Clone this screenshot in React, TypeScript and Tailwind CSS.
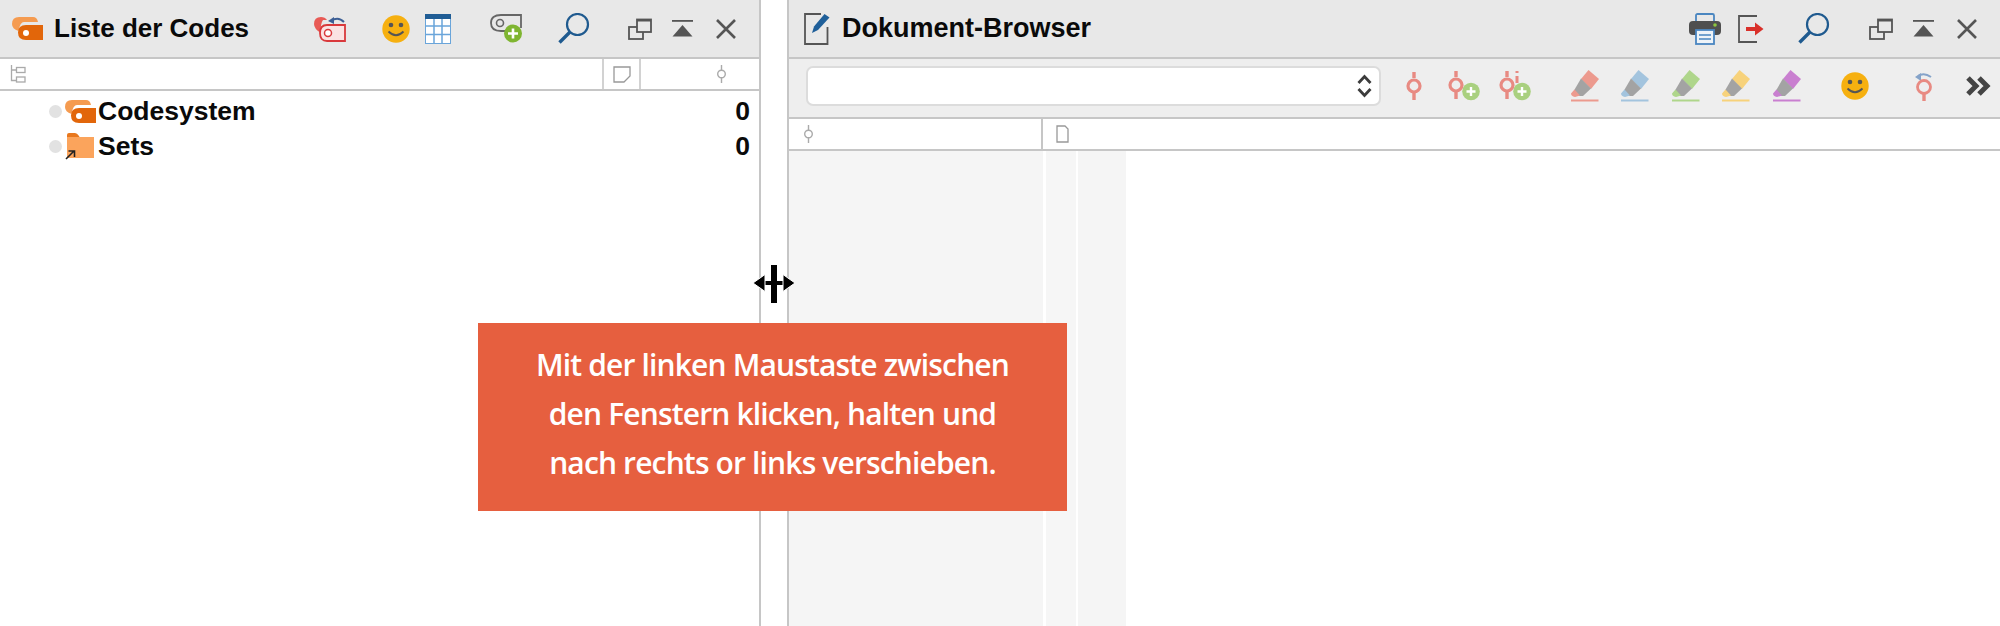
const PIN = '#e88a82'
const GREEN = '#a9d07f'

function CodeIcon() {
  return (
    <svg width="32" height="24" viewBox="0 0 32 24" className="shrink-0">
      <path d="M0 7 Q0 0 7 0 H21 Q25 0 26 5 H12 Q8 5 6.500 14 Q0 12 0 7Z" fill="#f59b50" />
      <path d="M14 8 H31 V23 H14 Q6 23 6 15.500 Q6 8 14 8Z" fill="#e2660a" />
      <circle cx="14" cy="16" r="3" fill="#fff" />
    </svg>
  )
}

function FolderIcon() {
  return (
    <svg width="30" height="27" viewBox="0 0 30 27" className="shrink-0">
      <path d="M2 5 V2 Q2 0 4 0 H10 Q12 0 14 3 L15 5Z" fill="#e8781e" />
      <rect x="2" y="4" width="27" height="21" fill="#fba45c" />
      <path d="M1 26 L9 18 M3.500 18 H9.500 V24" fill="none" stroke="#222" strokeWidth="1.600" />
    </svg>
  )
}

function HeartUndoIcon() {
  return (
    <svg width="33" height="26" viewBox="0 0 33 26" className="shrink-0">
      <path d="M0 8 Q0 1 7 1 Q11 1 13 4 H9 Q6 8 7 17 Q0 13 0 8Z" fill="#e85a55" />
      <path d="M13 9 H31 V25 H13 Q6 25 6 17 Q6 9 13 9Z" fill="#fbe3e3" stroke="#d9393c" strokeWidth="1.800" />
      <circle cx="14" cy="17" r="3.500" fill="#fff" stroke="#d9393c" strokeWidth="1.500" />
      <path d="M17 5 Q24 0 30 6" fill="none" stroke="#3c5f95" strokeWidth="2" />
      <path d="M14 5 L20 1 V8Z" fill="#3c5f95" />
    </svg>
  )
}

function Smile() {
  return (
    <svg width="28" height="28" viewBox="0 0 28 28" className="shrink-0">
      <circle cx="14" cy="14" r="13.700" fill="#f6b010" />
      <circle cx="9" cy="10" r="2.300" fill="#555" />
      <circle cx="19" cy="10" r="2.300" fill="#555" />
      <path d="M6.500 16.500 Q14 24 21.500 16.500" fill="none" stroke="#555" strokeWidth="1.800" />
    </svg>
  )
}

function TableIcon() {
  return (
    <svg width="26" height="30" viewBox="0 0 26 30" className="shrink-0">
      <rect x="0.500" y="4" width="25" height="25.500" fill="#fff" stroke="#6aa5da" />
      <path d="M9 5 V29 M17 5 V29 M1 12 H25 M1 20.500 H25" stroke="#6aa5da" strokeWidth="1.500" />
      <rect x="0" y="0" width="26" height="5" fill="#1f5c94" />
    </svg>
  )
}

function CodeAddIcon() {
  return (
    <svg width="33" height="29" viewBox="0 0 33 29" className="shrink-0">
      <path d="M31 14 V1 H11 Q1 1 1 9 Q1 17 11 17 H16" fill="none" stroke="#666" strokeWidth="1.800" />
      <circle cx="10" cy="9" r="3.500" fill="none" stroke="#666" strokeWidth="1.600" />
      <circle cx="23" cy="19.500" r="9" fill="#7fb531" />
      <path d="M23 14.500 V24.500 M18 19.500 H28" stroke="#fff" strokeWidth="2.600" />
    </svg>
  )
}

function SearchIcon() {
  return (
    <svg width="32" height="31" viewBox="0 0 32 31" className="shrink-0">
      <circle cx="19.500" cy="11.500" r="10.500" fill="none" stroke="#1f5a8f" strokeWidth="2.200" />
      <path d="M12 19 L1.500 29.500" stroke="#1f5a8f" strokeWidth="3.400" />
    </svg>
  )
}

function WindowsIcon() {
  return (
    <svg width="24" height="22" viewBox="0 0 24 22" className="shrink-0">
      <rect x="1" y="9" width="14" height="12" fill="none" stroke="#555" strokeWidth="1.800" />
      <rect x="9" y="1.500" width="14" height="12.500" fill="#e8e8e8" stroke="#555" strokeWidth="1.800" />
      <rect x="9" y="1" width="14" height="2.500" fill="#555" />
    </svg>
  )
}

function CollapseIcon() {
  return (
    <svg width="21" height="17" viewBox="0 0 21 17" className="shrink-0">
      <rect x="0" y="0" width="21" height="1.800" fill="#555" />
      <path d="M10.500 5 L20.500 16.500 H0.500Z" fill="#555" />
    </svg>
  )
}

function CloseIcon() {
  return (
    <svg width="20" height="20" viewBox="0 0 20 20" className="shrink-0">
      <path d="M1 1 L19 19 M19 1 L1 19" stroke="#555" strokeWidth="2.600" />
    </svg>
  )
}

function DocEditIcon() {
  return (
    <svg width="26" height="32" viewBox="0 0 26 32" className="shrink-0">
      <path d="M17 1 H1 V31 H23.500 V14" fill="none" stroke="#555" strokeWidth="1.800" />
      <path d="M8 20 L10 13.500 L20.500 1 L25.500 4.500 L14 17 Z" fill="#1f5f99" />
    </svg>
  )
}

function PrinterIcon() {
  return (
    <svg width="32" height="32" viewBox="0 0 32 32" className="shrink-0">
      <rect x="7" y="1" width="18" height="12" rx="1.500" fill="none" stroke="#4a86c0" strokeWidth="1.800" />
      <rect x="0" y="8" width="32" height="14" rx="4" fill="#4f4f4f" />
      <circle cx="26" cy="12" r="1.800" fill="#8cc63f" />
      <rect x="7" y="17" width="18" height="14" fill="#eef3f8" stroke="#4a86c0" strokeWidth="1.800" />
      <path d="M10 22 H22 M10 26 H22" stroke="#4a86c0" strokeWidth="1.500" />
    </svg>
  )
}

function ExportIcon() {
  return (
    <svg width="26" height="28" viewBox="0 0 26 28" className="shrink-0">
      <path d="M19 1 H1 V27 H19" fill="none" stroke="#555" strokeWidth="1.800" />
      <path d="M8 12 H17 V7.500 L25.500 14 L17 20.500 V16 H8Z" fill="#d9302a" />
    </svg>
  )
}

function Chevrons() {
  return (
    <svg width="15" height="26" viewBox="0 0 15 26" className="shrink-0">
      <path d="M1.500 10 L7.500 3.500 L13.500 10" fill="none" stroke="#3c3c3c" strokeWidth="2.800" />
      <path d="M1.500 16 L7.500 22.500 L13.500 16" fill="none" stroke="#3c3c3c" strokeWidth="2.800" />
    </svg>
  )
}

function PinIcon() {
  return (
    <svg width="16" height="28" viewBox="0 0 16 28" className="shrink-0">
      <path d="M8 0 V6 M8 21 V28" stroke={PIN} strokeWidth="3.400" />
      <circle cx="8" cy="14" r="6" fill="none" stroke={PIN} strokeWidth="3.200" />
    </svg>
  )
}

function PinAddIcon({ info = false }: { info?: boolean }) {
  return (
    <svg width="32" height="30" viewBox="0 0 32 30" className="shrink-0">
      <path d="M8 0 V6 M8 21 V28" stroke={PIN} strokeWidth="3.400" />
      <circle cx="8" cy="14" r="6" fill="none" stroke={PIN} strokeWidth="3.200" />
      {info && <path d="M18 -1 V2 M18 5 V12" stroke={PIN} strokeWidth="3" />}
      <circle cx="23" cy="20.500" r="8.800" fill={GREEN} />
      <path d="M23 16 V25 M18.500 20.500 H27.500" stroke="#fff" strokeWidth="2.400" />
    </svg>
  )
}

function Marker({ color }: { color: string }) {
  return (
    <svg width="28" height="32" viewBox="0 0 28 32" className="shrink-0">
      <path d="M17.500 0 L28 9 L20 19 L10 9Z" fill={color} />
      <path d="M10 8.500 L20 18.500 L12 26 L8 26 L3 20.500Z" fill="#a3a3a3" />
      <path d="M3.500 19.500 L9 25.500 L4 27 Q0 26 0 23.500Z" fill={color} />
      <rect x="0" y="29.500" width="27.500" height="2" fill={color} />
    </svg>
  )
}

function PinUndoIcon() {
  return (
    <svg width="19" height="29" viewBox="0 0 19 29" className="shrink-0">
      <path d="M4 4 Q10 0 17 5" fill="none" stroke="#85a3c9" strokeWidth="2" />
      <path d="M1 5 L7 1 V9Z" fill="#85a3c9" />
      <path d="M10 22 V29" stroke={PIN} strokeWidth="3.400" />
      <circle cx="10" cy="15" r="6.500" fill="none" stroke={PIN} strokeWidth="2.800" />
    </svg>
  )
}

function MoreIcon() {
  return (
    <svg width="27" height="20" viewBox="0 0 27 20" className="shrink-0">
      <path d="M2 2 L10 10 L2 18 M13 2 L21 10 L13 18" fill="none" stroke="#444" strokeWidth="5" />
    </svg>
  )
}

function TreeGlyph() {
  return (
    <svg width="16" height="18" viewBox="0 0 16 18" className="shrink-0">
      <path d="M1.500 0 V15.500 H6 M1.500 5 H6" fill="none" stroke="#aaa" strokeWidth="1.300" />
      <rect x="6.500" y="2.500" width="8.500" height="5" fill="none" stroke="#aaa" strokeWidth="1.300" />
      <rect x="6.500" y="12" width="8.500" height="5" fill="none" stroke="#aaa" strokeWidth="1.300" />
    </svg>
  )
}

function NoteGlyph() {
  return (
    <svg width="18" height="17" viewBox="0 0 18 17" className="shrink-0">
      <path d="M1 1 H17 V10 L11 16 H1Z" fill="none" stroke="#999" strokeWidth="1.300" />
    </svg>
  )
}

function PageGlyph() {
  return (
    <svg width="13" height="18" viewBox="0 0 13 18" className="shrink-0">
      <path d="M1 1 H9 L12 4 V17 H1Z" fill="none" stroke="#999" strokeWidth="1.300" />
    </svg>
  )
}

function SegGlyph() {
  return (
    <svg width="11" height="18" viewBox="0 0 11 18" className="shrink-0">
      <path d="M5.500 0 V5 M5.500 13 V18" stroke="#aaa" strokeWidth="1.400" />
      <circle cx="5.500" cy="9" r="3.800" fill="none" stroke="#aaa" strokeWidth="1.400" />
    </svg>
  )
}

function WindowControls() {
  return (
    <div className="flex items-center">
      <WindowsIcon />
      <div className="ml-[20px]"><CollapseIcon /></div>
      <div className="ml-[23px]"><CloseIcon /></div>
    </div>
  )
}

function TreeRow({ icon, label }: { icon: React.ReactNode; label: string }) {
  return (
    <div className="flex h-[35px] items-center pr-[9px] pl-[49px]">
      <span className="h-[13px] w-[13px] shrink-0 rounded-full bg-[#e2e2e2]" />
      <span className="ml-[3px] flex w-[33px] items-center">{icon}</span>
      <span className="text-[26.500px] leading-none font-bold text-[#0a0a0a]">{label}</span>
      <span className="ml-auto text-[26.500px] leading-none font-bold text-[#0a0a0a]">0</span>
    </div>
  )
}

export default function App() {
  return (
    <div className="relative flex h-[626px] w-[2000px] overflow-hidden bg-white font-['Liberation_Sans',Arial,sans-serif]">
      {/* Liste der Codes */}
      <div className="flex h-full w-[761px] shrink-0 flex-col border-r-2 border-[#c6c6c6]">
        <div className="flex h-[59px] shrink-0 items-center border-b-2 border-[#c6c6c6] bg-[#e8e8e8] pr-[23px] pl-[12px]">
          <CodeIcon />
          <span className="ml-[10px] text-[26px] font-bold text-[#0a0a0a]">Liste der Codes</span>
          <div className="ml-auto flex items-center">
            <HeartUndoIcon />
            <div className="ml-[35px]"><Smile /></div>
            <div className="ml-[15px]"><TableIcon /></div>
            <div className="ml-[39px]"><CodeAddIcon /></div>
            <div className="ml-[35px]"><SearchIcon /></div>
            <div className="ml-[38px]"><WindowControls /></div>
          </div>
        </div>
        <div className="flex h-[32px] shrink-0 items-center border-b-2 border-[#c6c6c6] pl-[10px]">
          <TreeGlyph />
          <div className="ml-auto flex h-full w-[39px] items-center justify-center border-x-2 border-[#d2d2d2]">
            <NoteGlyph />
          </div>
          <div className="flex w-[118px] justify-end pr-[32px]">
            <SegGlyph />
          </div>
        </div>
        <div className="pt-[3px]">
          <TreeRow icon={<CodeIcon />} label="Codesystem" />
          <TreeRow icon={<FolderIcon />} label="Sets" />
        </div>
      </div>

      {/* Splitter */}
      <div className="w-[26px] shrink-0 bg-white" />

      {/* Dokument-Browser */}
      <div className="flex h-full flex-1 flex-col border-l-2 border-[#c6c6c6]">
        <div className="flex h-[59px] shrink-0 items-center border-b-2 border-[#c6c6c6] bg-[#e8e8e8] pr-[23px] pl-[15px]">
          <DocEditIcon />
          <span className="ml-[12px] text-[27px] font-bold text-[#0a0a0a]">Dokument-Browser</span>
          <div className="ml-auto flex items-center">
            <PrinterIcon />
            <div className="ml-[17px]"><ExportIcon /></div>
            <div className="ml-[34px]"><SearchIcon /></div>
            <div className="ml-[39px]"><WindowControls /></div>
          </div>
        </div>
        <div className="flex h-[60px] shrink-0 items-center border-b-2 border-[#c6c6c6] bg-[#eeeeee] pb-[4px] pl-[17px]">
          <div className="flex h-[40px] w-[575px] items-center justify-end rounded-[7px] border-2 border-[#dcdcdc] bg-white pr-[7px]">
            <Chevrons />
          </div>
          <div className="ml-[25px]"><PinIcon /></div>
          <div className="ml-[26px]"><PinAddIcon /></div>
          <div className="ml-[19px]"><PinAddIcon info /></div>
          <div className="ml-[40px]"><Marker color="#ec9a8e" /></div>
          <div className="ml-[22px]"><Marker color="#a3c4de" /></div>
          <div className="ml-[23px]"><Marker color="#afd68b" /></div>
          <div className="ml-[22px]"><Marker color="#f7d27b" /></div>
          <div className="ml-[23px]"><Marker color="#c97fd0" /></div>
          <div className="ml-[40px]"><Smile /></div>
          <div className="ml-[45px]"><PinUndoIcon /></div>
          <div className="ml-[33px]"><MoreIcon /></div>
        </div>
        <div className="flex h-[32px] shrink-0 items-center border-b-2 border-[#c6c6c6]">
          <div className="flex h-full w-[254px] items-center border-r-2 border-[#c6c6c6] pl-[14px]">
            <SegGlyph />
          </div>
          <div className="ml-[13px]"><PageGlyph /></div>
        </div>
        <div className="flex flex-1">
          <div className="w-[254px] bg-[#f5f5f5]" />
          <div className="ml-[3px] w-[30px] bg-[#f6f6f6]" />
          <div className="ml-[2px] w-[48px] bg-[#f5f5f5]" />
        </div>
      </div>

      {/* Hinweis */}
      <div className="absolute top-[323px] left-[478px] flex h-[188px] w-[589px] flex-col items-center justify-center bg-[#e65f3f] pb-[8px] font-['Open_Sans',sans-serif] text-[30px] leading-[49px] font-semibold tracking-[-0.850px] text-white">
        <p>Mit der linken Maustaste zwischen</p>
        <p>den Fenstern klicken, halten und</p>
        <p>nach rechts or links verschieben.</p>
      </div>

      {/* Cursor */}
      <svg width="44" height="44" viewBox="0 0 44 44" className="absolute top-[262px] left-[752px]">
        <path d="M22 3 V41" stroke="#000" strokeWidth="6" />
        <path d="M6 21 H38" stroke="#000" strokeWidth="4" />
        <path d="M1 21 L13 12.500 V29.500Z M43 21 L31 12.500 V29.500Z" fill="#000" stroke="#fff" strokeWidth="1" />
      </svg>
    </div>
  )
}
